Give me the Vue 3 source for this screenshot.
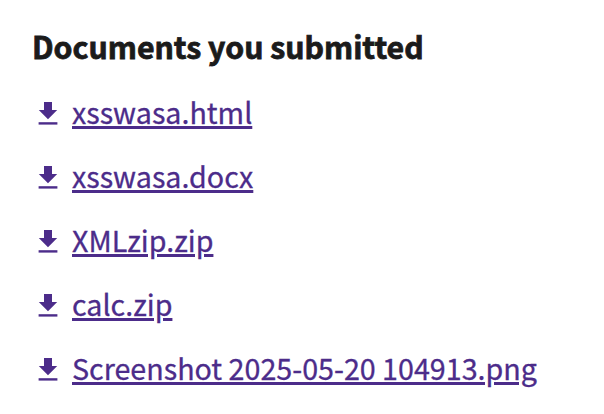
<script setup>
const files = [
  'xsswasa.html',
  'xsswasa.docx',
  'XMLzip.zip',
  'calc.zip',
  'Screenshot 2025-05-20 104913.png',
]
</script>

<template>
  <section class="documents">
    <h2 class="title">Documents you submitted</h2>
    <ul class="list">
      <li v-for="file in files" :key="file" class="item">
        <svg class="icon" viewBox="0 0 20 24" aria-hidden="true">
          <path d="M6 0h8v8h5.2L10 17.3 .8 8H6z" />
          <path d="M.6 20.2h18.8v2.4H.6z" />
        </svg>
        <a class="link" href="#">{{ file }}</a>
      </li>
    </ul>
  </section>
</template>

<style>
body {
  background: #fff;
}
</style>

<style scoped>
.documents {
  box-sizing: border-box;
  height: 414px;
  padding: 26px 32px 0;
  overflow: hidden;
  font-family: "Noto Sans CJK SC", "Noto Sans", sans-serif;
  color: #1b1b1b;
}
.title {
  margin: 0;
  font-size: 30.25px;
  line-height: 40px;
  font-weight: 700;
  white-space: nowrap;
  -webkit-text-stroke: 0.8px currentColor;
}
.list {
  margin: 16px 0 0;
  padding: 0;
  list-style: none;
}
.item {
  display: flex;
  align-items: center;
  height: 64px;
}
.icon {
  flex: none;
  width: 20px;
  height: 24px;
  margin: 0 14px 0 6px;
  fill: #4c2c8a;
}
.link {
  margin-bottom: 4px;
  font-size: 28.67px;
  line-height: 40px;
  color: #4c2c8a;
  text-decoration: underline;
  text-decoration-thickness: 3px;
  text-underline-offset: 2px;
  white-space: nowrap;
  -webkit-text-stroke: 0.3px currentColor;
}
</style>
